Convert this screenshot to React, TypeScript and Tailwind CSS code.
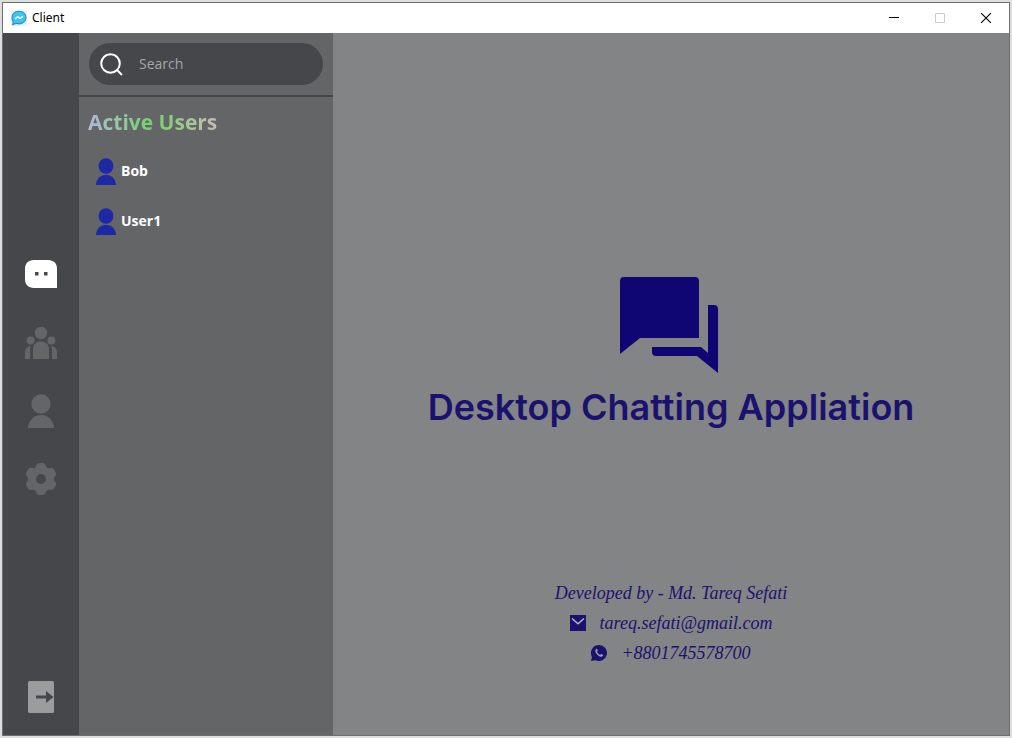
import React from "react";

const toothAngles = [0, 60, 120, 180, 240, 300];

function MessengerLogo() {
  return (
    <svg viewBox="0 0 16 16" className="size-4" aria-hidden="true">
      <path d="M0 0h16v16H0z" fill="#eef0f2" />
      <path d="M8 .8c4.300 0 7.500 2.900 7.500 6.800S12.300 14.400 8 14.400c-1 0-1.900-.1-2.800-.4L1 15.400l.6-3.500C.8 10.700.5 9.300.5 7.600.5 3.700 3.700.8 8 .8z" fill="#1d8fe0" />
      <path d="M8 1.800c3.800 0 6.500 2.400 6.500 5.600S11.800 13.200 8 13.200c-1 0-2-.2-2.900-.5l-2.900.9.500-2.300C1.900 10.300 1.500 9 1.500 7.500 1.500 4.200 4.200 1.800 8 1.800z" fill="#3fc4ee" />
      <path d="M4 9l2.700-2.200 2.300 1.500L12 6.300" fill="none" stroke="#fff" strokeWidth="1.400" strokeLinejoin="round" />
    </svg>
  );
}

function PersonIcon({ className }: { className: string }) {
  return (
    <svg viewBox="0 0 26 34" preserveAspectRatio="none" className={className} fill="currentColor" aria-hidden="true">
      <circle cx="13" cy="10" r="9.700" />
      <path d="M0 34v-1C1 25.500 6.500 21 13 21s12 4.500 13 12v1z" />
    </svg>
  );
}

function GroupIcon() {
  return (
    <svg viewBox="0 0 32 32" className="size-8" fill="currentColor" aria-hidden="true">
      <circle cx="16" cy="6" r="6.200" />
      <circle cx="5.600" cy="13.500" r="4" />
      <circle cx="26.400" cy="13.500" r="4" />
      <path d="M8 32v-9.500C8 17 11.500 14.500 16 14.500s8 2.500 8 8V32z" />
      <path d="M0 32v-7c0-3.500 2-5.500 6-6-.6 1.200-1 2.500-1 4v9zM32 32v-7c0-3.500-2-5.500-6-6 .6 1.200 1 2.500 1 4v9z" />
    </svg>
  );
}

function GearIcon() {
  return (
    <svg viewBox="0 0 32 32" className="size-8" aria-hidden="true">
      {toothAngles.map((angle) => (
        <path
          key={angle}
          transform={`rotate(${angle} 16 16)`}
          d="M14.500 0h3c1.500 0 2.300.8 3 2 .7 1.400 1 2.600 2.400 3.200L16.500 17h-1L9.100 5.200C10.500 4.600 10.800 3.400 11.500 2c.7-1.200 1.500-2 3-2z"
          fill="currentColor"
        />
      ))}
      <circle cx="16" cy="16" r="11" fill="currentColor" />
      <circle cx="16" cy="16" r="5" fill="#46474b" />
    </svg>
  );
}

function ActiveUser({ name }: { name: string }) {
  return (
    <li>
      <button type="button" className="flex h-[50px] w-full items-center gap-[5px] pl-[17px] text-left">
        <PersonIcon className="h-[27px] w-5 text-[#1c28a5]" />
        <span className="text-sm font-bold text-white">{name}</span>
      </button>
    </li>
  );
}

export default function App() {
  return (
    <div className="flex min-h-screen flex-col bg-[#dedede] p-[2px] font-['Open_Sans','Noto_Sans',sans-serif]">
      <div className="flex flex-1 flex-col border border-[#6d6e6f]">
        <header className="flex h-[30px] items-center bg-white pl-2">
          <MessengerLogo />
          <h1 className="ml-[5px] flex-1 font-['Noto_Sans',sans-serif] text-xs text-black">Client</h1>
          <button type="button" aria-label="Minimize" className="flex h-[30px] w-[46px] items-center justify-center">
            <svg viewBox="0 0 10 10" className="size-[10px]"><path d="M0 4h10v1H0z" /></svg>
          </button>
          <button type="button" aria-label="Maximize" disabled className="flex h-[30px] w-[46px] items-center justify-center">
            <svg viewBox="0 0 10 10" className="size-[10px]" fill="none" stroke="#cccccc"><path d="M.5.5h9v9h-9z" /></svg>
          </button>
          <button type="button" aria-label="Close" className="flex h-[30px] w-[46px] items-center justify-center">
            <svg viewBox="0 0 10 10" className="size-[10px]" stroke="#000" strokeWidth="1.100"><path d="M0 0l10 10M10 0L0 10" /></svg>
          </button>
        </header>

        <div className="flex flex-1">
          <nav className="flex w-[76px] shrink-0 flex-col items-center bg-[#46474b] pb-[22px] text-[#646567]">
            <div className="flex flex-1 flex-col items-center justify-center gap-[35px] pt-[41px]">
              <button type="button" aria-label="Chats" className="flex h-8 items-start">
                <svg viewBox="0 0 32 28" className="h-7 w-8">
                  <path d="M9 0h14c6 0 9 3.500 9 9v19H9c-6 0-9-3.500-9-9V9c0-5.500 3-9 9-9z" fill="#fff" />
                  <path d="M10 12h3.500v3.500H10zM19 12h3.500v3.500H19z" fill="#46474b" />
                </svg>
              </button>
              <button type="button" aria-label="Groups"><GroupIcon /></button>
              <button type="button" aria-label="Profile"><PersonIcon className="h-[34px] w-[26px]" /></button>
              <button type="button" aria-label="Settings"><GearIcon /></button>
            </div>
            <button type="button" aria-label="Log out">
              <svg viewBox="0 0 26 32" className="h-8 w-[26px]">
                <rect width="26" height="32" rx="1.500" fill="#9b9c9e" />
                <path d="M8 14.500h10V10l7.500 6-7.500 6v-4.500H8z" fill="#46474b" />
              </svg>
            </button>
          </nav>

          <aside className="w-[254px] shrink-0 bg-[#646567]">
            <div className="border-b-2 border-[#46474b] p-[10px]">
              <label className="flex h-[42px] items-center gap-4 rounded-full bg-[#46474b] pl-[11px] pr-4">
                <svg viewBox="0 0 23 23" className="size-[23px] shrink-0" fill="none" stroke="#fff" strokeWidth="2" aria-hidden="true">
                  <circle cx="10.500" cy="10.500" r="9.300" />
                  <path d="M17 17l5 5" />
                </svg>
                <input type="text" aria-label="Search" placeholder="Search" className="w-full min-w-0 bg-transparent text-sm text-white outline-none placeholder:text-[#a5a6a8]" />
              </label>
            </div>
            <h2 className="ml-[9px] mt-[9px] w-fit bg-linear-to-r from-[#afb9d9] via-[#70d364] to-[#c5b9b7] bg-clip-text text-[21px] leading-8 font-bold text-transparent">
              Active Users
            </h2>
            <ul className="mt-2">
              <ActiveUser name="Bob" />
              <ActiveUser name="User1" />
            </ul>
          </aside>

          <main className="flex flex-1 flex-col items-center bg-[#838485] pt-[244px] text-[#1b1270]">
            <svg viewBox="0 0 102 96" className="h-24 w-[102px]" fill="#100673" aria-hidden="true">
              <path d="M4 0h71q4 0 4 4v57H20L0 77V4q0-4 4-4z" />
              <path d="M88 28h6q4 0 4 4v64L77 79H36q-4 0-4-4v-5h49l7 6z" />
            </svg>
            <h2 className="mt-[10px] whitespace-nowrap text-center font-[Inter,'Liberation_Sans',sans-serif] text-4xl leading-12 font-semibold">
              Desktop Chatting Appliation
            </h2>
            <footer className="mt-[147px] flex flex-col items-center font-['Liberation_Serif',serif] text-lg leading-[30px] italic">
              <p>Developed by - Md. Tareq Sefati</p>
              <p className="flex items-center gap-[14px]">
                <svg viewBox="0 0 16 16" className="size-4" aria-hidden="true">
                  <path d="M0 0h16v16H0z" fill="currentColor" />
                  <path d="M2 3.500l6 5.300 6-5.300" fill="none" stroke="#b5b6c0" strokeWidth="1.500" />
                </svg>
                <a href="mailto:tareq.sefati@gmail.com">tareq.sefati@gmail.com</a>
              </p>
              <p className="flex items-center gap-[14px]">
                <svg viewBox="0 0 16 16" className="size-4" aria-hidden="true">
                  <path d="M8 0a8 8 0 1 1-3.500 15.200L0 16l1-4A8 8 0 0 1 8 0z" fill="currentColor" />
                  <path d="M4.600 4.500c.8-1.200 1.500-.8 2 .6.400 1-.7 1.300-.3 2.100.7 1.200 1.400 1.900 2.600 2.500.8.400 1-.9 1.900-.5 1.400.6 1.700 1 1 1.900-1.300 1.500-3.600.5-5.400-1.300C4.600 8 3.800 6 4.600 4.500z" fill="#9b9ba7" />
                </svg>
                <a href="tel:+8801745578700">+8801745578700</a>
              </p>
            </footer>
          </main>
        </div>
      </div>
    </div>
  );
}
